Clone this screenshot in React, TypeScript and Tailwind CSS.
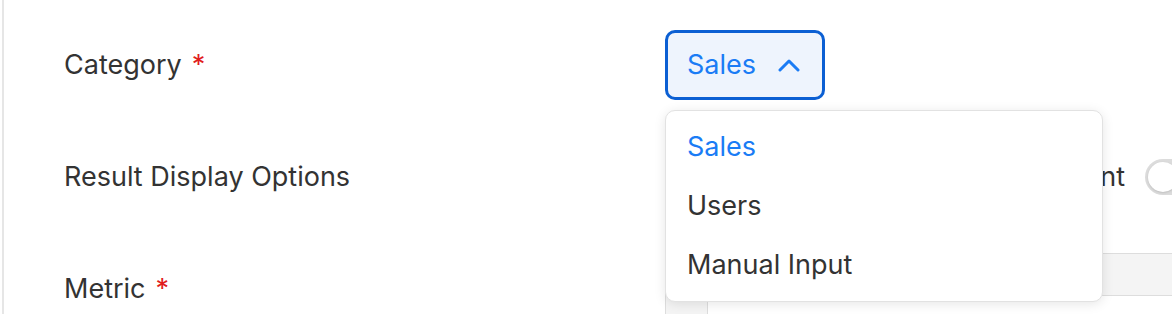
const font = { fontFamily: "Inter, 'Noto Sans', sans-serif" };

function Label({ text, required }: { text: string; required?: boolean }) {
  return (
    <div className="w-[601px] shrink-0 text-[27px] text-[#333333]">
      {text}
      {required && <span className="ml-[10px] text-[#e11d1d]">*</span>}
    </div>
  );
}

export default function App() {
  return (
    <div className="relative h-[314px] w-[1172px] overflow-hidden bg-white" style={font}>
      <div className="h-full w-[1203px] border-l-2 border-[#e6e6e6] ml-[2px] pl-[60px] pt-[9px]">
        {/* Category */}
        <div className="flex h-[112px] items-center">
          <Label text="Category" required />
          <button className="flex h-[70px] w-[160px] items-center rounded-[10px] border-[3px] border-[#0b5fd3] bg-[#eef4fd] pl-[19px] text-[27px] text-[#1a7cf5]">
            Sales
            <svg className="ml-[22px]" width="22" height="14" viewBox="0 0 22 14" fill="none">
              <path d="M2 12 L11 3 L20 12" stroke="#1a7cf5" strokeWidth="3" strokeLinecap="round" strokeLinejoin="round" />
            </svg>
          </button>
        </div>

        {/* Result display */}
        <div className="flex h-[112px] items-center">
          <Label text="Result Display Options" />
          <div className="flex flex-1 items-center justify-end gap-[20px]">
            <span className="text-[27px] text-[#333333]">Show as Percent</span>
            <div className="h-[36px] w-[60px] shrink-0 rounded-full bg-[#dcdcdc] p-[3px]">
              <div className="h-[30px] w-[30px] rounded-full bg-white shadow" />
            </div>
          </div>
        </div>

        {/* Metric */}
        <div className="flex h-[112px] items-center">
          <Label text="Metric" required />
          <div className="self-start mt-[20px] flex-1 border-l border-t border-[#dddddd]">
            <div className="h-[42px] border-b border-[#dddddd] bg-[#f4f4f4]" />
            <div className="flex h-[40px]">
              <div className="w-[42px] border-r border-[#dddddd] bg-[#f4f4f4]" />
            </div>
          </div>
        </div>
      </div>

      {/* dropdown menu */}
      <div className="absolute left-[665px] top-[110px] h-[192px] w-[438px] rounded-[10px] border border-[#e2e2e2] bg-white pt-[7px] pl-[21px] shadow-[0_2px_12px_rgba(0,0,0,0.1)]">
        <div className="flex h-[59px] items-center text-[27px] text-[#1a7cf5]">Sales</div>
        <div className="flex h-[59px] items-center text-[27px] text-[#333333]">Users</div>
        <div className="flex h-[59px] items-center text-[27px] text-[#333333]">Manual Input</div>
      </div>
    </div>
  );
}
